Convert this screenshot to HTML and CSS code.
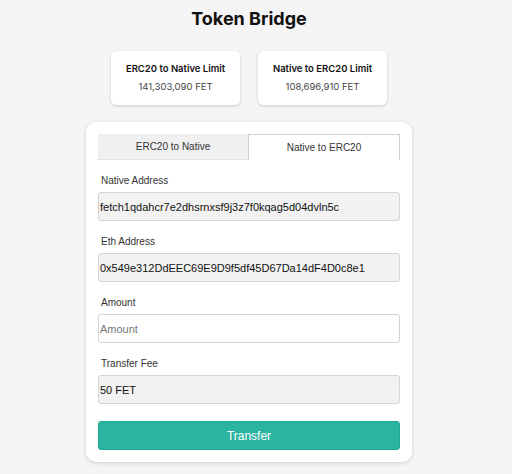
FILE: index.html
```html
<!DOCTYPE html>
<html>
<head>
<meta charset="utf-8">
<link rel="stylesheet" href="styles.css">
</head>
<body>
<div class="page">
  <h1 class="title">Token Bridge</h1>
  <div class="limits">
    <div class="limit-card">
      <div class="limit-title">ERC20 to Native Limit</div>
      <div class="limit-value">141,303,090 FET</div>
    </div>
    <div class="limit-card">
      <div class="limit-title">Native to ERC20 Limit</div>
      <div class="limit-value">108,696,910 FET</div>
    </div>
  </div>
  <div class="panel">
    <div class="tabs">
      <div class="tab">ERC20 to Native</div>
      <div class="tab active">Native to ERC20</div>
    </div>
    <div class="field">
      <label class="label">Native Address</label>
      <div class="input disabled">fetch1qdahcr7e2dhsrnxsf9j3z7f0kqag5d04dvln5c</div>
    </div>
    <div class="field">
      <label class="label">Eth Address</label>
      <div class="input disabled">0x549e312DdEEC69E9D9f5df45D67Da14dF4D0c8e1</div>
    </div>
    <div class="field">
      <label class="label">Amount</label>
      <div class="input placeholder">Amount</div>
    </div>
    <div class="field">
      <label class="label">Transfer Fee</label>
      <div class="input disabled">50 FET</div>
    </div>
    <button class="transfer">Transfer</button>
  </div>
</div>
</body>
</html>
```
FILE: styles.css
```css
html, body {
  margin: 0;
  padding: 0;
  background: #f5f5f5;
}
body {
  width: 512px;
  height: 474px;
  overflow: hidden;
}
.page {
  width: 326px;
  margin-left: 86px;
  display: flex;
  flex-direction: column;
  align-items: center;
}
.title {
  margin: 8px 0 0 0;
  font-family: Inter, sans-serif;
  font-weight: 700;
  font-size: 18px;
  line-height: 22px;
  color: #111;
}
.limits {
  display: flex;
  gap: 18px;
  margin-top: 21px;
}
.limit-card {
  width: 129px;
  height: 54px;
  background: #fff;
  border-radius: 5px;
  box-shadow: 0 1px 3px rgba(0,0,0,0.18);
  display: flex;
  flex-direction: column;
  align-items: center;
  font-family: Inter, sans-serif;
  font-size: 9.5px;
}
.limit-title {
  margin-top: 12px;
  line-height: 12px;
  font-weight: 600;
  color: #111;
}
.limit-value {
  margin-top: 6px;
  line-height: 12px;
  color: #444;
}
.panel {
  margin-top: 17px;
  width: 326px;
  box-sizing: border-box;
  padding: 12px;
  background: #fff;
  border-radius: 10px;
  box-shadow: 0 1px 4px rgba(0,0,0,0.16);
  display: flex;
  flex-direction: column;
}
.tabs {
  display: flex;
  height: 26px;
}
.tab {
  flex: 1;
  display: flex;
  align-items: center;
  justify-content: center;
  font-family: "Liberation Sans", Arial, sans-serif;
  font-size: 10px;
  color: #333;
  background: #f0f0f0;
  border-bottom: 1px solid #e2e2e2;
}
.tab.active {
  background: #fff;
  border: 1px solid #d0d0d0;
  border-bottom: none;
}
.field {
  display: flex;
  flex-direction: column;
  margin-top: 14px;
}
.label {
  font-family: "Liberation Sans", Arial, sans-serif;
  font-size: 10px;
  line-height: 12px;
  color: #333;
  padding-left: 3px;
  margin-top: 1px;
  margin-bottom: 5px;
}
.input {
  height: 29px;
  box-sizing: border-box;
  border: 1px solid #d4d4d4;
  border-radius: 3px;
  padding: 0 1px;
  display: flex;
  align-items: center;
  font-family: "Liberation Sans", Arial, sans-serif;
  font-size: 11px;
  color: #111;
}
.input.disabled {
  background: #f2f2f2;
}
.input.placeholder {
  background: #fff;
  color: #777;
  font-size: 11px;
}
.transfer {
  margin-top: 17px;
  height: 29px;
  border: 1px solid #22a893;
  border-radius: 3px;
  background: #2bb5a0;
  color: #fff;
  font-family: "Liberation Sans", Arial, sans-serif;
  font-size: 12px;
  padding: 0;
}
```
